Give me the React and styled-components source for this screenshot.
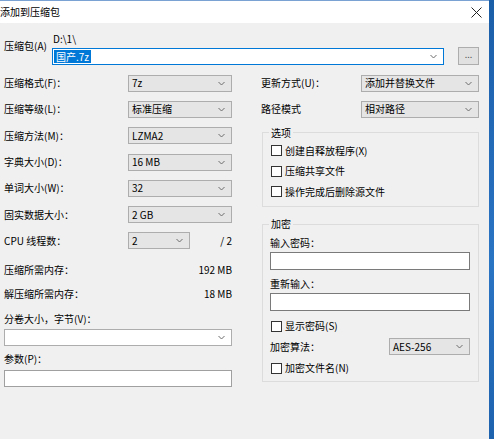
import React from "react";
import styled, { createGlobalStyle } from "styled-components";

const GlobalStyle = createGlobalStyle`
  html, body {
    margin: 0;
    padding: 0;
    background: #f0f0f0;
  }
  * {
    box-sizing: border-box;
  }
`;

const Page = styled.div`
  display: flex;
  width: 494px;
  height: 439px;
  overflow: hidden;
  font-family: "Noto Sans CJK SC", "Noto Sans", sans-serif;
  font-size: 10px;
  color: #000;
`;

const Window = styled.div`
  flex: 1;
  display: flex;
  flex-direction: column;
  background: #f0f0f0;
  border-top: 1px solid #7aa3d4;
`;

const DesktopEdge = styled.div`
  width: 5px;
  background: linear-gradient(#1b5ea8, #2a74c4 60%, #1d62ad);
`;

const TitleBar = styled.div`
  height: 22px;
  background: #fff;
  display: flex;
  align-items: center;
  justify-content: space-between;
  padding: 0 7px 0 0;
`;

const Title = styled.div`
  margin-left: 0;
  font-size: 10px;
  line-height: 12px;
`;

const Body = styled.div`
  flex: 1;
  padding: 10px 10px 0 4px;
`;

const ArchiveRow = styled.div`
  display: flex;
`;

const ArchiveLabel = styled.div`
  width: 48px;
  margin-top: 7px;
  line-height: 12px;
`;

const ArchiveMain = styled.div`
  flex: 1;
  display: flex;
  flex-direction: column;
`;

const PathText = styled.div`
  line-height: 12px;
  margin-left: 1px;
  margin-bottom: 2px;
`;

const ComboLine = styled.div`
  display: flex;
  align-items: center;
  justify-content: space-between;
  height: 18px;
`;

const Selected = styled.span`
  background: #0078d7;
  color: #fff;
  line-height: 13px;
  padding: 0 2px;
`;

const BrowseButton = styled.div`
  width: 21px;
  height: 18px;
  border: 1px solid #adadad;
  background: #e1e1e1;
  display: flex;
  align-items: center;
  justify-content: center;
  color: #555;
  font-size: 9px;
  line-height: 10px;
  padding-bottom: 3px;
`;

const Columns = styled.div`
  display: flex;
  margin-top: 5px;
  gap: 29px;
`;

const Column = styled.div`
  width: ${p => p.$w};
  display: flex;
  flex-direction: column;
`;

const Row = styled.div`
  display: flex;
  align-items: center;
  justify-content: space-between;
  height: ${p => p.$h || "26.3px"};
  margin-top: ${p => p.$mt || "0px"};
  line-height: 12px;
  white-space: nowrap;
`;

const Label = styled.div`
  line-height: 12px;
  height: ${p => p.$h || "14px"};
  margin-top: ${p => p.$mt || "0px"};
  display: flex;
  align-items: center;
  white-space: nowrap;
`;

const Select = styled.div`
  width: ${p => p.$w || "104px"};
  height: 17px;
  margin-top: ${p => p.$mt || "0px"};
  border: 1px solid ${p => (p.$focus ? "#0078d7" : "#adadad")};
  background: ${p => (p.$white ? "#fff" : "#e5e5e5")};
  display: flex;
  align-items: center;
  justify-content: space-between;
  padding: 0 6px 0 ${p => (p.$focus ? "1px" : "3px")};
  line-height: 12px;
`;

const TextBox = styled.div`
  width: 100%;
  height: ${p => p.$h || "17px"};
  margin-top: ${p => p.$mt || "0px"};
  border: 1px solid ${p => (p.$dark ? "#7a7a7a" : "#a0a0a0")};
  background: #fff;
`;

const SplitRight = styled.div`
  display: flex;
  align-items: center;
  justify-content: space-between;
  width: ${p => p.$w};
`;

const Group = styled.fieldset`
  margin: ${p => p.$mt || "0px"} 0 0 1px;
  padding: ${p => p.$pad};
  border: 1px solid #dcdcdc;
  min-width: 0;
`;

const Legend = styled.legend`
  padding: 0 2px;
  margin-left: -1px;
  line-height: 12px;
  font-size: 10px;
`;

const CheckRow = styled.div`
  display: flex;
  align-items: center;
  gap: 3px;
  height: ${p => p.$h || "20.5px"};
  margin-top: ${p => p.$mt || "0px"};
  line-height: 12px;
  white-space: nowrap;
  padding-left: 1px;
`;

const Box = styled.span`
  width: 11px;
  height: 11px;
  border: 1px solid #333;
  background: #fff;
  flex: none;
`;

const Chevron = () => (
  <svg width="7" height="5" viewBox="0 0 7 5">
    <path d="M0.5 1 L3.5 4 L6.5 1" fill="none" stroke="#6d6d6d" strokeWidth="1" />
  </svg>
);

const CloseIcon = () => (
  <svg width="11" height="11" viewBox="0 0 11 11">
    <path d="M0.5 0.5 L10.5 10.5 M10.5 0.5 L0.5 10.5" stroke="#222" strokeWidth="1" />
  </svg>
);

const Check = ({ children, h, mt }) => (
  <CheckRow $h={h} $mt={mt}>
    <Box />
    <span>{children}</span>
  </CheckRow>
);

const settings = [
  ["压缩格式(F)：", "7z"],
  ["压缩等级(L)：", "标准压缩"],
  ["压缩方法(M)：", "LZMA2"],
  ["字典大小(D)：", "16 MB"],
  ["单词大小(W)：", "32"],
  ["固实数据大小：", "2 GB"],
];

export default function App() {
  return (
    <Page>
      <GlobalStyle />
      <Window>
        <TitleBar>
          <Title>添加到压缩包</Title>
          <CloseIcon />
        </TitleBar>
        <Body>
          <ArchiveRow>
            <ArchiveLabel>压缩包(A)</ArchiveLabel>
            <ArchiveMain>
              <PathText>D:\1\</PathText>
              <ComboLine>
                <Select $w="392px" $white $focus>
                  <Selected>国产.7z</Selected>
                  <Chevron />
                </Select>
                <BrowseButton>...</BrowseButton>
              </ComboLine>
            </ArchiveMain>
          </ArchiveRow>

          <Columns>
            <Column $w="228px">
              {settings.map(([label, value]) => (
                <Row key={label}>
                  <span>{label}</span>
                  <Select>
                    <span>{value}</span>
                    <Chevron />
                  </Select>
                </Row>
              ))}
              <Row>
                <span>CPU 线程数：</span>
                <SplitRight $w="104px">
                  <Select $w="62px">
                    <span>2</span>
                    <Chevron />
                  </Select>
                  <span>/ 2</span>
                </SplitRight>
              </Row>
              <Row $h="20px" $mt="6px">
                <span>压缩所需内存：</span>
                <span>192 MB</span>
              </Row>
              <Row $h="20px" $mt="4px">
                <span>解压缩所需内存：</span>
                <span>18 MB</span>
              </Row>
              <Label $h="16px" $mt="7px">分卷大小，字节(V)：</Label>
              <Select $w="228px" $white $mt="2px">
                <span />
                <Chevron />
              </Select>
              <Label $h="16px" $mt="5px">参数(P)：</Label>
              <TextBox $mt="3px" />
            </Column>

            <Column $w="218px">
              <Row>
                <span>更新方式(U)：</span>
                <Select $w="118px">
                  <span>添加并替换文件</span>
                  <Chevron />
                </Select>
              </Row>
              <Row>
                <span>路径模式</span>
                <Select $w="118px">
                  <span>相对路径</span>
                  <Chevron />
                </Select>
              </Row>

              <Group $mt="4px" $pad="2px 7px 4px 7px">
                <Legend>选项</Legend>
                <Check>创建自释放程序(X)</Check>
                <Check>压缩共享文件</Check>
                <Check>操作完成后删除源文件</Check>
              </Group>

              <Group $mt="11px" $pad="0 8px 5px 7px">
                <Legend>加密</Legend>
                <Label $mt="6px">输入密码：</Label>
                <TextBox $dark $h="18px" $mt="2px" />
                <Label $mt="7px">重新输入：</Label>
                <TextBox $dark $h="18px" $mt="2px" />
                <Check h="16px" mt="7px">显示密码(S)</Check>
                <Row $h="17px" $mt="4px">
                  <span>加密算法：</span>
                  <Select $w="81px">
                    <span>AES-256</span>
                    <Chevron />
                  </Select>
                </Row>
                <Check h="16px" mt="5px">加密文件名(N)</Check>
              </Group>
            </Column>
          </Columns>
        </Body>
      </Window>
      <DesktopEdge />
    </Page>
  );
}
